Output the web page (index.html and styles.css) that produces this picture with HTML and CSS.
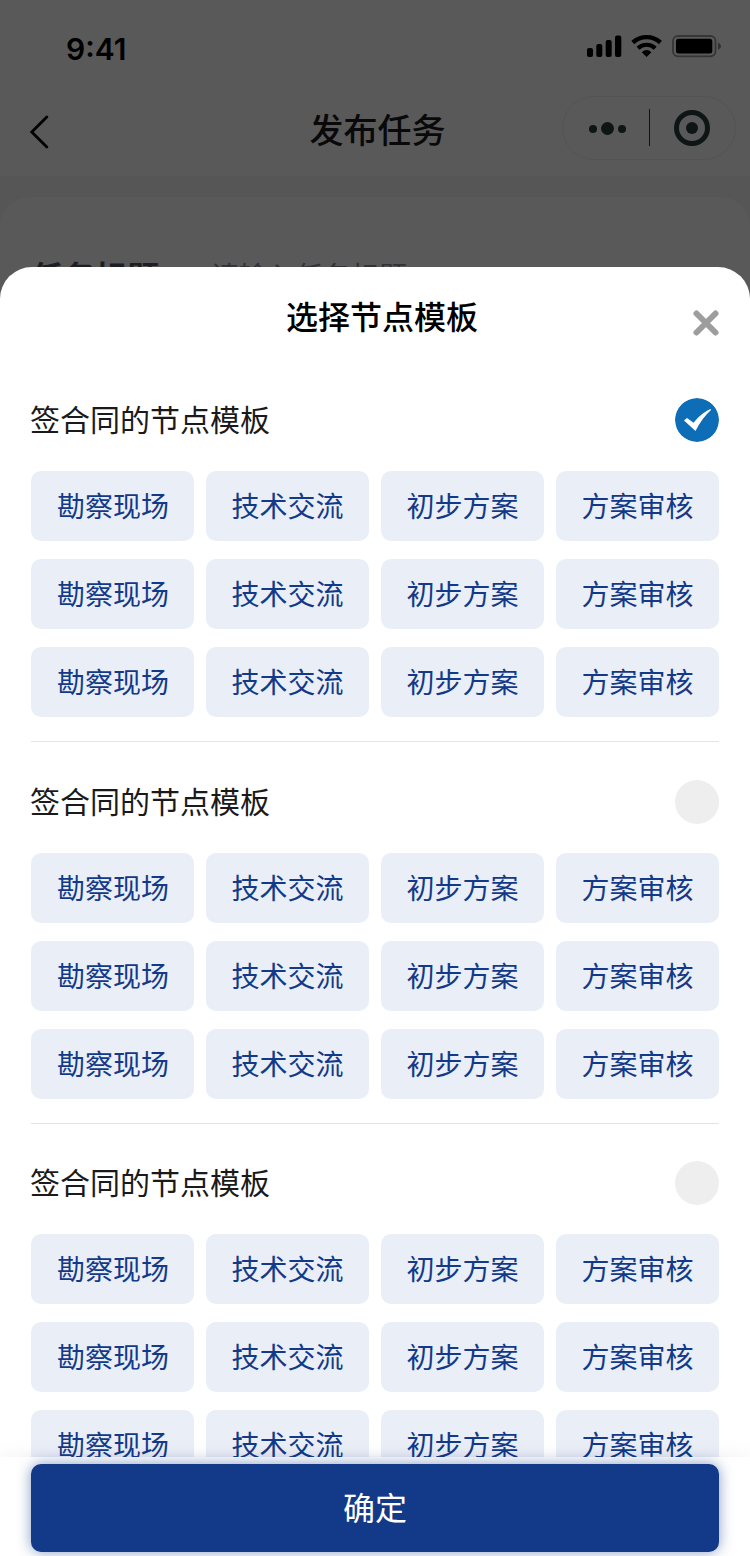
FILE: index.html
```
<!DOCTYPE html>
<html lang="zh-CN">
<head>
<meta charset="UTF-8">
<title>发布任务</title>
<link rel="stylesheet" href="styles.css">
</head>

<body>
<div class="page">
  <div class="statusbar">
    <span class="time">9:41</span>
    <svg class="status-icons" width="136" height="24" viewBox="0 0 136 24">
      <rect x="1" y="14" width="6" height="9" rx="2"/>
      <rect x="10.300" y="10" width="6" height="13" rx="2"/>
      <rect x="19.700" y="6" width="6" height="17" rx="2"/>
      <rect x="29" y="1.500" width="6.300" height="21.500" rx="2"/>
      <path d="M46.800 8.500 A20.500 20.500 0 0 1 74.400 8.500" fill="none" stroke="#000" stroke-width="4.400"/>
      <path d="M52 14.200 A12.500 12.500 0 0 1 69.200 14.200" fill="none" stroke="#000" stroke-width="4.200"/>
      <path d="M55.800 18.300 Q60.600 13.800 65.400 18.300 L60.600 23 Z"/>
      <rect x="87" y="2" width="42.500" height="20.300" rx="5" fill="none" stroke="#000" stroke-opacity=".4" stroke-width="1.800"/>
      <rect x="90" y="4.800" width="36.300" height="14.800" rx="2.500"/>
      <path d="M132 8.500 Q135 10 135 12.300 Q135 14.500 132 16 Z" fill-opacity=".45"/>
    </svg>
  </div>

  <div class="navbar">
    <svg class="back" width="20" height="34" viewBox="0 0 20 34">
      <path d="M16.800 2 L1.800 17 L16.800 32" fill="none" stroke="#000" stroke-width="2.800" stroke-linecap="round"/>
    </svg>
    <h1>发布任务</h1>
    <div class="capsule">
      <svg width="172" height="62" viewBox="0 0 172 62" fill="#2a3c3c">
        <circle cx="30" cy="32" r="4"/>
        <circle cx="44.500" cy="31.500" r="6.500"/>
        <circle cx="59" cy="32" r="4"/>
        <rect x="86" y="12" width="1" height="37"/>
        <circle cx="129" cy="31" r="15.500" fill="none" stroke="#2a3c3c" stroke-width="5"/>
        <circle cx="129" cy="31" r="6"/>
      </svg>
    </div>
  </div>

  <div class="form">
    <span class="label">任务标题</span>
    <span class="placeholder">请输入任务标题</span>
  </div>
</div>

<div class="mask"></div>

<div class="sheet">
  <div class="sheet-head">
    <h2>选择节点模板</h2>
    <svg class="close" width="28" height="28" viewBox="0 0 28 28">
      <path d="M4.500 4.500 L23.500 23.500 M23.500 4.500 L4.500 23.500" stroke="#9d9d9d" stroke-width="6" stroke-linecap="round"/>
    </svg>
  </div>

  <div class="list">
    <div class="template">
      <div class="template-head">
        <span>签合同的节点模板</span>
        <svg class="radio" width="44" height="44" viewBox="0 0 44 44">
          <circle cx="22" cy="22" r="22" fill="#0e6db7"/>
          <path d="M9 22.500 L12 20 L18.500 24.800 Q26 15 35.500 11 L36 12 Q27 20 20.500 33 Z" fill="#fff"/>
        </svg>
      </div>
      <div class="nodes">
        <span>勘察现场</span><span>技术交流</span><span>初步方案</span><span>方案审核</span>
        <span>勘察现场</span><span>技术交流</span><span>初步方案</span><span>方案审核</span>
        <span>勘察现场</span><span>技术交流</span><span>初步方案</span><span>方案审核</span>
      </div>
    </div>

    <div class="template">
      <div class="template-head">
        <span>签合同的节点模板</span>
        <i class="radio"></i>
      </div>
      <div class="nodes">
        <span>勘察现场</span><span>技术交流</span><span>初步方案</span><span>方案审核</span>
        <span>勘察现场</span><span>技术交流</span><span>初步方案</span><span>方案审核</span>
        <span>勘察现场</span><span>技术交流</span><span>初步方案</span><span>方案审核</span>
      </div>
    </div>

    <div class="template">
      <div class="template-head">
        <span>签合同的节点模板</span>
        <i class="radio"></i>
      </div>
      <div class="nodes">
        <span>勘察现场</span><span>技术交流</span><span>初步方案</span><span>方案审核</span>
        <span>勘察现场</span><span>技术交流</span><span>初步方案</span><span>方案审核</span>
        <span>勘察现场</span><span>技术交流</span><span>初步方案</span><span>方案审核</span>
      </div>
    </div>
  </div>

  <div class="footer">
    <button class="ok" type="button">确定</button>
  </div>
</div>
</body>
</html>
```

FILE: styles.css
```
* {
	box-sizing: border-box;
}

body {
	margin: 0;
	height: 1556px;
	position: relative;
	overflow: hidden;
	background: #f6f6f6;
	font-family: "Noto Sans CJK SC", sans-serif;
}

h1, h2 {
	margin: 0;
	font-weight: 500;
}

svg {
	display: block;
}

/* page behind the sheet */
.statusbar {
	height: 88px;
	padding: 34px 28px 0 66px;
	display: flex;
	justify-content: space-between;
	align-items: flex-start;
	background: #fff;
}

.time {
	font: 600 30px/31px Inter, sans-serif;
}

.navbar {
	height: 88px;
	padding: 0 14px 0 30px;
	display: grid;
	grid-template-columns: 174px 1fr 174px;
	align-items: center;
	background: #fff;
}

.navbar h1 {
	font-size: 34px;
	line-height: 50px;
	color: #1a1a1a;
	text-align: center;
	padding-right: 11px;
	margin-top: -6px;
}

.capsule {
	width: 174px;
	height: 64px;
	margin-top: -8px;
	border: 1px solid #eee;
	border-radius: 32px;
}

.form {
	height: 400px;
	margin-top: 21px;
	padding: 54px 31px;
	display: flex;
	align-items: flex-start;
	background: #fff;
	border-radius: 30px 30px 0 0;
	line-height: 48px;
}

.label {
	width: 180px;
	font-size: 32px;
	font-weight: 700;
	color: #585a6c;
}

.placeholder {
	font-size: 28px;
	color: #8f90a0;
}

.mask {
	position: absolute;
	top: 0;
	right: 0;
	bottom: 0;
	left: 0;
	background: rgba(0, 0, 0, .65);
}

/* bottom sheet */
.sheet {
	position: absolute;
	top: 267px;
	right: 0;
	bottom: 0;
	left: 0;
	display: flex;
	flex-direction: column;
	background: #fff;
	border-radius: 32px 32px 0 0;
	overflow: hidden;
}

.sheet-head {
	height: 93px;
	flex: none;
	padding: 24px 30px 0 286px;
	display: flex;
	justify-content: space-between;
}

.sheet-head h2 {
	font-size: 32px;
	line-height: 48px;
	color: #000;
}

.close {
	margin-top: 18px;
}

.list {
	flex: 1;
	min-height: 0;
	padding: 0 31px;
	overflow: hidden;
}

.template {
	padding: 38px 0 24px;
	border-bottom: 1px solid #e4e4e4;
}

.template:last-child {
	padding-top: 37px;
	border-bottom: none;
}

.template-head {
	height: 44px;
	margin: 0 0 29px -1px;
	display: flex;
	justify-content: space-between;
	font-size: 30px;
	line-height: 40px;
	color: #1a1a1a;
}

.radio {
	width: 44px;
	height: 44px;
	border-radius: 50%;
	background: #eee;
}

.nodes {
	display: grid;
	grid-template-columns: repeat(4, 163px);
	gap: 18px 12px;
}

.nodes span {
	height: 70px;
	border-radius: 10px;
	background: #eaeef7;
	color: #123a88;
	font-size: 28px;
	line-height: 68px;
	text-align: center;
}

.nodes span:nth-child(4n+1) {
	padding-left: 1px;
}

.footer {
	position: relative;
	flex: none;
	height: 99px;
	padding: 7px 31px 4px;
	background: #fff;
	box-shadow: 0 0 20px rgba(0, 0, 0, .06);
}

.ok {
	display: block;
	width: 100%;
	height: 88px;
	padding: 0 0 4px;
	border: none;
	border-radius: 10px;
	background: #123a88;
	box-shadow: 0 0 14px rgba(18, 58, 136, .5);
	color: #fff;
	font: 400 32px/84px "Noto Sans CJK SC", sans-serif;
}
```
